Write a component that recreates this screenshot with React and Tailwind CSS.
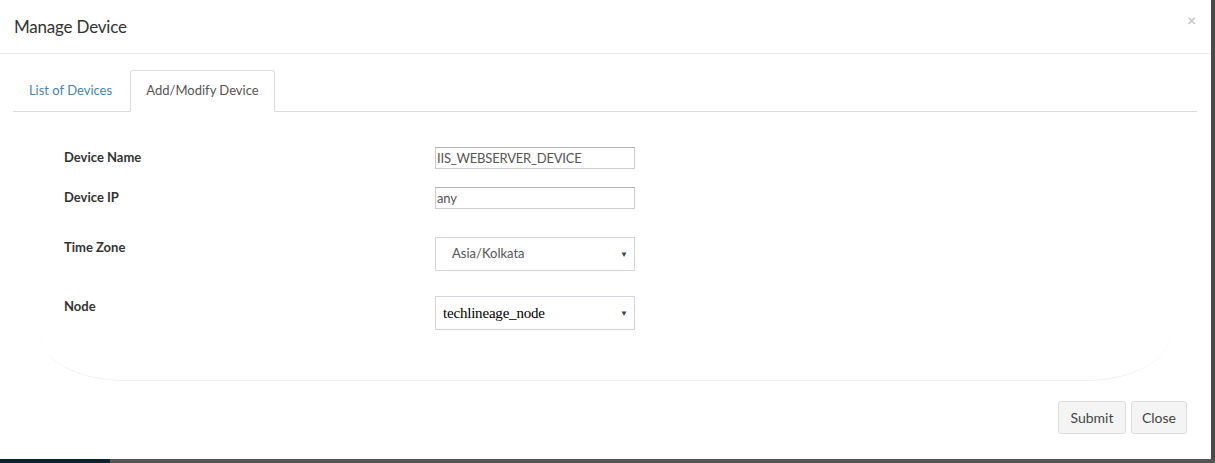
import React from 'react';

const sans = { fontFamily: 'Lato, "Open Sans", sans-serif' };

function Field({ label, children, className = '' }) {
  return (
    <div className={`flex items-start ${className}`}>
      <div className="w-[371px] text-[13px] leading-[20px] font-bold text-[#333]">{label}</div>
      {children}
    </div>
  );
}

function TextBox({ value }) {
  return (
    <div className="w-[200px] h-[22px] border border-[#ccc] border-t-[#b5b5b5] bg-white px-[1px] text-[13px] leading-[20px] tracking-[-0.2px] text-[#555]">
      {value}
    </div>
  );
}

function SelectBox({ value, serif }) {
  return (
    <div className="w-[200px] h-[34px] border border-[#d2d6de] bg-white flex items-center justify-between pr-[6px]">
      {serif ? (
        <span className="pl-[7px] text-[15px] tracking-[-0.2px] text-black" style={{ fontFamily: '"Liberation Serif", serif' }}>{value}</span>
      ) : (
        <span className="pl-[16px] text-[13px] text-[#555]">{value}</span>
      )}
      <span className="text-[8px] text-[#444]">▼</span>
    </div>
  );
}

export default function App() {
  return (
    <div className="w-[1215px] h-[463px] flex flex-col bg-[#4a4a4a] overflow-hidden" style={sans}>
      <div className="flex flex-1 min-h-0">
        <div className="w-[1211px] bg-white flex flex-col">
          {/* Header */}
          <div className="h-[54px] border-b border-[#ececec] flex items-start justify-between pl-[14px] pr-[15px]">
            <h4 className="mt-[14px] text-[17px] leading-[26px] tracking-[-0.2px] text-[#333]">Manage Device</h4>
            <span className="mt-[10px] text-[15px] leading-[20px] text-[#c8c8c8] font-bold">×</span>
          </div>

          {/* Body */}
          <div className="pt-[16px] pl-[13px] pr-[14px]">
            <div className="flex border-b border-[#ddd] h-[42px]">
              <div className="w-[115px] mr-[2px] h-[41px] flex items-center justify-center text-[13px] text-[#4a84b0]">
                List of Devices
              </div>
              <div className="w-[145px] h-[42px] -mb-px bg-white border border-[#ddd] border-b-white rounded-t-[3px] flex items-center justify-center text-[13px] text-[#555]">
                Add/Modify Device
              </div>
            </div>

            <div className="ml-[27px] mr-[27px] pt-[35px] pb-[50px] pl-[24px] border-b border-[#efefef] rounded-bl-[85px_46px] rounded-br-[85px_46px]">
              <Field label="Device Name">
                <TextBox value="IIS_WEBSERVER_DEVICE" />
              </Field>
              <Field label="Device IP" className="mt-[18px]">
                <TextBox value="any" />
              </Field>
              <Field label="Time Zone" className="mt-[28px]">
                <SelectBox value="Asia/Kolkata" />
              </Field>
              <Field label="Node" className="mt-[25px]">
                <SelectBox value="techlineage_node" serif />
              </Field>
            </div>
          </div>

          {/* Footer */}
          <div className="flex justify-end gap-[5px] pt-[20px] pr-[24px]">
            <button className="w-[68px] h-[33px] bg-[#f4f4f4] border border-[#ddd] rounded-[3px] text-[14px] text-[#444]">Submit</button>
            <button className="w-[56px] h-[33px] bg-[#f4f4f4] border border-[#ddd] rounded-[3px] text-[14px] text-[#444]">Close</button>
          </div>
        </div>
        <div className="flex-1 bg-[#4a4a4a]" />
      </div>
      <div className="h-[4px] flex">
        <div className="w-[110px] bg-[#0d2430]" />
        <div className="flex-1 bg-[#555]" />
      </div>
    </div>
  );
}
